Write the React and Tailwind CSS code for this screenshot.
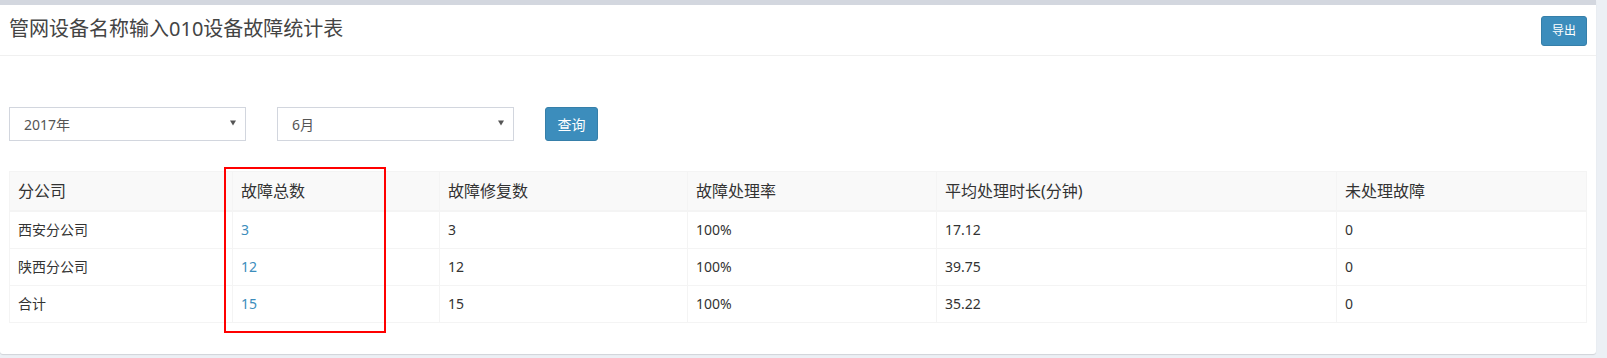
import React from 'react';

const cols = [
  { label: '分公司', w: 'w-[223px]' },
  { label: '故障总数', w: 'w-[207px]' },
  { label: '故障修复数', w: 'w-[248px]' },
  { label: '故障处理率', w: 'w-[249px]' },
  { label: '平均处理时长(分钟)', w: 'w-[400px]' },
  { label: '未处理故障', w: 'w-[250px]' },
];

const rows = [
  ['西安分公司', '3', '3', '100%', '17.12', '0'],
  ['陕西分公司', '12', '12', '100%', '39.75', '0'],
  ['合计', '15', '15', '100%', '35.22', '0'],
];

const FakeSelect = ({ value }) => (
  <div className="w-[237px] h-[34px] border border-[#d2d6de] bg-white flex items-center justify-between pl-[14px] pr-[9px] text-[14px] text-[#555]">
    <span>{value}</span>
    <svg width="6" height="6" viewBox="0 0 6 6" className="mb-[2px]">
      <path d="M0 0.5 L6 0.5 L3 5.5 Z" fill="#555" />
    </svg>
  </div>
);

const App = () => {
  return (
    <div
      className="w-[1607px] h-[358px] bg-[#ecf0f5] pr-[11px]"
      style={{ fontFamily: '"Noto Sans", "Noto Sans CJK SC", sans-serif' }}
    >
      <div className="bg-white border-t-[5px] border-[#d3d7df] rounded-b-[3px] shadow-[0_1px_1px_rgba(0,0,0,0.12)]">
        {/* box header */}
        <div className="h-[51px] flex items-center justify-between pl-[9px] pr-[9px] border-b border-[#f0f0f0]">
          <h3 className="text-[20px] leading-[24px] text-[#444] pb-[3px]">管网设备名称输入010设备故障统计表</h3>
          <button className="w-[46px] h-[30px] mt-[2px] bg-[#3c8dbc] border border-[#367fa9] rounded-[3px] text-white text-[12px]">
            导出
          </button>
        </div>

        {/* box body */}
        <div className="px-[9px] pt-[51px] pb-[31px]">
          <div className="flex items-center">
            <FakeSelect value="2017年" />
            <div className="ml-[31px]">
              <FakeSelect value="6月" />
            </div>
            <button className="ml-[31px] w-[53px] h-[34px] bg-[#3c8dbc] border border-[#367fa9] rounded-[3px] text-white text-[14px]">
              查询
            </button>
          </div>

          <div className="relative mt-[30px] w-[1578px]">
            <table className="table-fixed border-collapse w-full border border-[#f4f4f4]">
              <thead>
                <tr className="bg-[#f9f9f9]">
                  {cols.map((c) => (
                    <th
                      key={c.label}
                      className={`${c.w} text-left font-normal text-[16px] leading-[22px] text-[#333] px-[8px] py-[8px] border border-[#f4f4f4] border-b-2`}
                    >
                      {c.label}
                    </th>
                  ))}
                </tr>
              </thead>
              <tbody>
                {rows.map((r) => (
                  <tr key={r[0]}>
                    {r.map((v, i) => (
                      <td
                        key={i}
                        className={`text-[14px] leading-[20px] px-[8px] py-[8px] border border-[#f4f4f4] ${
                          i === 1 ? 'text-[#3c8dbc]' : 'text-[#333]'
                        }`}
                      >
                        {v}
                      </td>
                    ))}
                  </tr>
                ))}
              </tbody>
            </table>
            {/* red annotation box */}
            <div className="absolute left-[215px] top-[-4px] w-[162px] h-[166px] border-2 border-[#ff0000] pointer-events-none" />
          </div>
        </div>
      </div>
    </div>
  );
};

export default App;
